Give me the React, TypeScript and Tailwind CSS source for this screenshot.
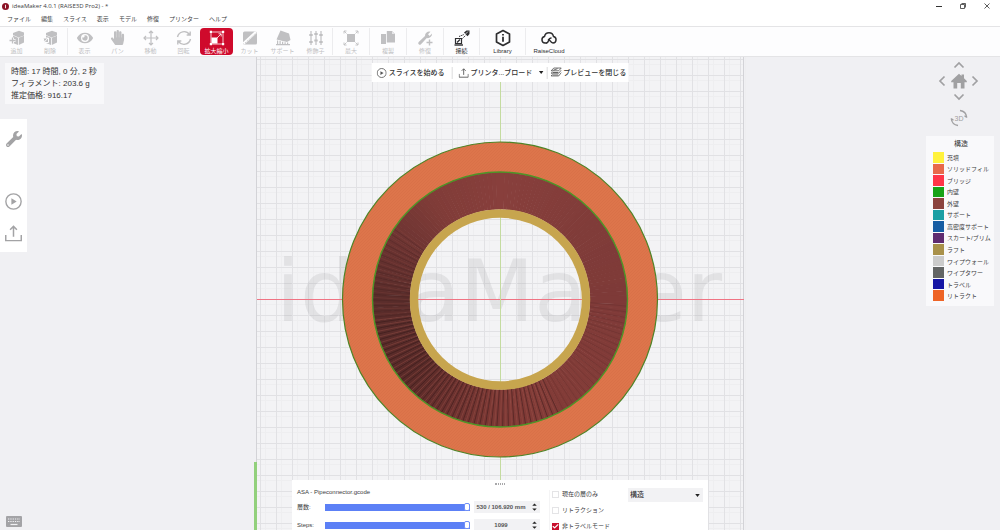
import React from "react";
import { FaEye, FaHandPaper, FaWrench } from "react-icons/fa";
import { Check } from "lucide-react";

type IconName =
  | "add" | "remove" | "view" | "pan" | "move" | "rotate" | "scale" | "cut"
  | "support" | "modifier" | "max" | "copy" | "repair" | "connect" | "library" | "cloud";

const menus = ["ファイル", "編集", "スライス", "表示", "モデル", "修復", "プリンター", "ヘルプ"];

const tools: { icon: IconName; label: string; box: string; tone: string }[] = [
  { icon: "add", label: "追加", box: "w-[33px]", tone: "text-[#c0c0c2]" },
  { icon: "remove", label: "削除", box: "w-[35px] border-r border-[#ececee]", tone: "text-[#c0c0c2]" },
  { icon: "view", label: "表示", box: "w-[33px]", tone: "text-[#c0c0c2]" },
  { icon: "pan", label: "パン", box: "w-[33px]", tone: "text-[#c0c0c2]" },
  { icon: "move", label: "移動", box: "w-[33px]", tone: "text-[#c0c0c2]" },
  { icon: "rotate", label: "回転", box: "w-[33px]", tone: "text-[#c0c0c2]" },
  { icon: "scale", label: "拡大縮小", box: "w-[33px] rounded-sm bg-[#cf0a2c]", tone: "text-white" },
  { icon: "cut", label: "カット", box: "w-[33px]", tone: "text-[#c0c0c2]" },
  { icon: "support", label: "サポート", box: "w-[33px]", tone: "text-[#c0c0c2]" },
  { icon: "modifier", label: "修飾子", box: "w-[34px] border-r border-[#ececee]", tone: "text-[#c0c0c2]" },
  { icon: "max", label: "最大", box: "w-[37px] border-r border-[#ececee]", tone: "text-[#c0c0c2]" },
  { icon: "copy", label: "複製", box: "w-[37px] border-r border-[#ececee]", tone: "text-[#c0c0c2]" },
  { icon: "repair", label: "修復", box: "w-[37px] border-r border-[#ececee]", tone: "text-[#c0c0c2]" },
  { icon: "connect", label: "接続", box: "w-[36px] border-r border-[#ececee]", tone: "text-[#2e2e30]" },
  { icon: "library", label: "Library", box: "w-[46px] border-r border-[#ececee]", tone: "text-[#2e2e30]" },
  { icon: "cloud", label: "RaiseCloud", box: "w-[46px]", tone: "text-[#2e2e30]" },
];

const legend = [
  { label: "充填", color: "bg-[#fff23c]" },
  { label: "ソリッドフィル", color: "bg-[#e8694a]" },
  { label: "ブリッジ", color: "bg-[#ff3548]" },
  { label: "内壁", color: "bg-[#17a317]" },
  { label: "外壁", color: "bg-[#8c433e]" },
  { label: "サポート", color: "bg-[#1b9fa4]" },
  { label: "高密度サポート", color: "bg-[#175da3]" },
  { label: "スカート/ブリム", color: "bg-[#5f2b70]" },
  { label: "ラフト", color: "bg-[#a9914a]" },
  { label: "ワイプウォール", color: "bg-[#cbcbcb]" },
  { label: "ワイプタワー", color: "bg-[#626464]" },
  { label: "トラベル", color: "bg-[#1616a5]" },
  { label: "リトラクト", color: "bg-[#ee6426]" },
];

function ToolIcon({ name }: { name: IconName }) {
  if (name === "view") return <FaEye className="size-4" />;
  if (name === "pan") return <FaHandPaper className="size-[15px]" />;
  return (
    <svg viewBox="0 0 16 16" className="size-4 overflow-visible" fill="none" stroke="currentColor" strokeWidth="1">
      {name === "add" && (
        <g>
          <path d="M4 3 10 .8l5 1.700v3L9.600 7.500 4 5z" fill="currentColor" stroke="none" />
          <path d="M4 5.500 9 7.700V15l-5-2zM9.800 7.700 15 5.800V12.500L9.800 15z" fill="currentColor" stroke="none" />
          <path d="M.5 10.500h6M3.500 7.500v6" stroke="#fdfdfe" strokeWidth="3" />
          <path d="M.5 10.500h6M3.500 7.500v6" strokeWidth="1.300" />
        </g>
      )}
      {name === "remove" && (
        <g>
          <path d="M4 3 10 .8l5 1.700v3L9.600 7.500 4 5z" fill="currentColor" stroke="none" />
          <path d="M4 5.500 9 7.700V15l-5-2zM9.800 7.700 15 5.800V12.500L9.800 15z" fill="currentColor" stroke="none" />
          <path d="M1 8h5.500v4.500H2.500z" stroke="#fdfdfe" strokeWidth="1" fill="currentColor" />
          <path d="M2 12.500 6 8" stroke="#fdfdfe" />
        </g>
      )}
      {name === "move" && (
        <path d="M8 1v14M1 8h14M6 3l2-2 2 2M6 13l2 2 2-2M3 6 1 8l2 2M13 6l2 2-2 2" strokeWidth="1.200" />
      )}
      {name === "rotate" && (
        <path d="M1.500 7A6.700 6.700 0 0 1 13.500 4.500M14.500 9A6.700 6.700 0 0 1 2.500 11.500M14.200 1.500v3.500h-3.500M1.800 14.500V11h3.500" strokeWidth="1.400" />
      )}
      {name === "scale" && (
        <g>
          <path d="M2 2h12v12H2z" strokeWidth=".8" />
          <path d="M2.500 7.500h6v6h-6z" fill="currentColor" stroke="none" />
          <path d="M8 8 12 4M9.500 3.800h2.700v2.700" strokeWidth=".8" />
          <path d="M.8.800h2.200v2.200H.8zM13 .8h2.200v2.200H13zM13 13h2.200v2.200H13zM.8 13h2.200v2.200H.8z" fill="currentColor" stroke="none" />
        </g>
      )}
      {name === "cut" && (
        <g>
          <rect x="1" y="1.500" width="14" height="13" rx="1.500" fill="currentColor" stroke="none" />
          <path d="M1.500 13.500 14 2" stroke="#fdfdfe" strokeWidth="2.400" />
          <path d="M3 13 13.500 3.500" strokeWidth=".7" strokeDasharray="1.500 1" />
        </g>
      )}
      {name === "support" && (
        <g fill="currentColor" stroke="none">
          <path d="M5.500.500 14 3.500 15.500 10 12 12 1.500 9.500z" />
          <path d="M2 10.500h1.200V15H2zM4.500 11h1.200v4H4.500zM7 11.800h1.200V15H7zM9.500 12.300h1.200V15H9.500zM12 12.500h1.200V15H12zM1 14h14v1.200H1z" />
        </g>
      )}
      {name === "modifier" && (
        <g>
          <path d="M3 1v14M8 1v14M13 1v14" strokeWidth="1.200" />
          <path d="M1.300 5h3.400M6.300 10.500h3.400M11.300 5h3.400M1.300 12h3.400M6.300 4h3.400M11.300 12h3.400" strokeWidth="2" />
        </g>
      )}
      {name === "max" && (
        <g>
          <rect x="4" y="4" width="8" height="8" fill="currentColor" stroke="none" />
          <path d="M1 1l2.500 2.500M15 1l-2.500 2.500M1 15l2.500-2.500M15 15l-2.500-2.500M1 3.500V1h2.500M12.500 1H15v2.500M15 12.500V15h-2.500M3.500 15H1v-2.500" strokeWidth=".9" />
        </g>
      )}
      {name === "copy" && (
        <g fill="currentColor" stroke="none">
          <path d="M1 4h5v10H1z" />
          <path d="M6.800 1H12l3 3v8.500H6.800z" />
          <path d="M12 1v3h3z" fill="#e6e6e8" />
        </g>
      )}
      {name === "repair" && (
        <g>
          <path d="M13.500 1.700 11 4.200l.8.900.8.800L15 3.500A4.200 4.200 0 0 1 9.800 8L4 14.200a1.600 1.600 0 0 1-2.300-2.300L8 6A4.200 4.200 0 0 1 13.500 1.700z" fill="currentColor" stroke="none" />
          <path d="M12.500 9.500v6M9.500 12.500h6" strokeWidth="1.400" />
        </g>
      )}
      {name === "connect" && (
        <g>
          <path d="M1.500 8.500h6v5h-6z" strokeWidth="1.200" />
          <path d="M.5 15h8.500" strokeWidth="1.400" />
          <path d="M3 12.500 6 9.500" strokeWidth="1.200" />
          <path d="M5 6.500 10 4.500M8.500 8.500l3-3" strokeDasharray="1.500 .8" />
          <path d="M10 2.500 12.500.500H15.500V4l-2 2.200z" fill="currentColor" stroke="none" />
          <path d="m11.500 4 2.500-2.500" stroke="#fff" strokeWidth=".7" />
        </g>
      )}
      {name === "library" && (
        <g>
          <path d="M8 .5 14.500 4v8L8 15.500 1.500 12V4z" strokeWidth="1.700" strokeLinejoin="round" />
          <path d="M8 6.800v5M8 4v1.600" strokeWidth="1.800" />
        </g>
      )}
      {name === "cloud" && (
        <g strokeWidth="1.500" strokeLinecap="round">
          <path d="M5.500 13H4a3.300 3.300 0 0 1-.5-6.500 4.600 4.600 0 0 1 9 0A3.300 3.300 0 0 1 12 13c-2.500 0-3-3.500-4.500-3.500" />
          <path d="M5.500 13c2.500 0 1.500-5 4.500-5" />
        </g>
      )}
    </svg>
  );
}

function PlayIcon({ className }: { className: string }) {
  return (
    <svg viewBox="0 0 16 16" className={className} fill="none" stroke="currentColor">
      <circle cx="8" cy="8" r="7.200" strokeWidth="1.300" />
      <path d="M6 5v6l5-3z" fill="currentColor" stroke="none" />
    </svg>
  );
}

function UploadIcon({ className }: { className: string }) {
  return (
    <svg viewBox="0 0 16 16" className={className} fill="none" stroke="currentColor" strokeWidth="1.400">
      <path d="M.7 9.500v5.200h14.600V9.500M8 11V1.300M4.800 4.500 8 1.300l3.200 3.200" />
    </svg>
  );
}

function LayersIcon() {
  return (
    <svg viewBox="0 0 16 16" className="size-[11px] shrink-0" fill="none" stroke="currentColor" strokeWidth="1">
      <path d="M4.500 1.500h11l-4 4H.7zM2.500 7.300.7 9h11l3.800-4.500M2.500 10.800.7 13h11l3.800-5" />
      <path d="M4 4.500 10 2.500M3 8h8M3 11.500h8" />
    </svg>
  );
}

const chevrons = {
  up: { box: "0 0 12 8", size: "h-2 w-3", d: "M1.500 6.500 6 2l4.500 4.500" },
  down: { box: "0 0 12 8", size: "h-2 w-3", d: "M1.500 1.500 6 6l4.500-4.500" },
  left: { box: "0 0 8 12", size: "h-3 w-2", d: "M6.500 1.500 2 6l4.500 4.500" },
  right: { box: "0 0 8 12", size: "h-3 w-2", d: "M1.500 1.500 6 6l-4.500 4.500" },
};

function Chevron({ to }: { to: keyof typeof chevrons }) {
  const c = chevrons[to];
  return (
    <svg viewBox={c.box} className={c.size} fill="none" stroke="currentColor" strokeWidth="1.700">
      <path d={c.d} />
    </svg>
  );
}

const CX = 500;
const CY = 242.5;
const axisY = 242.5;

// Point on a circle round the model's centre; degrees run clockwise from the right.
const at = (r: number, deg: number) => {
  const a = (deg * Math.PI) / 180;
  return `${(CX + r * Math.cos(a)).toFixed(2)} ${(CY + r * Math.sin(a)).toFixed(2)}`;
};

const shadeStops: [number, number[]][] = [
  [0, [126, 58, 56]],
  [45, [130, 60, 56]],
  [85, [128, 58, 54]],
  [110, [110, 50, 47]],
  [140, [88, 42, 40]],
  [180, [90, 45, 43]],
  [205, [106, 51, 49]],
  [235, [128, 60, 56]],
  [270, [136, 63, 60]],
  [320, [128, 60, 57]],
  [360, [126, 58, 56]],
];

function shade(deg: number) {
  const i = Math.max(1, shadeStops.findIndex(([d]) => d >= deg));
  const [d0, c0] = shadeStops[i - 1];
  const [d1, c1] = shadeStops[i];
  const t = (deg - d0) / (d1 - d0);
  return `rgb(${c0.map((c, k) => Math.round(c + (c1[k] - c) * t)).join(",")})`;
}

const wedges = Array.from({ length: 180 }, (_, i) => i * 2);
const ribs = Array.from({ length: 82 }, (_, i) => 2 + i * 2.6);

function Scene() {
  const lines = Array.from({ length: 31 }, (_, i) => i - 15);
  return (
    <svg viewBox="0 0 1000 473" preserveAspectRatio="xMidYMin slice" className="size-full" aria-label="モデルのプレビュー">
      <defs>
        <pattern id="solid" width="3" height="3" patternUnits="userSpaceOnUse">
          <rect width="3" height="3" fill="#dd754b" />
          <path d="M0 3 3 0" stroke="#d66e46" strokeWidth=".6" />
        </pattern>
        <pattern id="raft" width="2" height="3" patternUnits="userSpaceOnUse">
          <rect width="2" height="3" fill="#cfae54" />
          <path d="M1 0v3" stroke="#b08d3a" strokeWidth=".5" />
        </pattern>
      </defs>
      <rect width="1000" height="473" fill="#f0f0f3" />
      <rect x="256" y="0" width="488" height="473" fill="#f3f3f5" />
      {lines.map((k) => (
        <g key={k}>
          <path d={`M${CX + k * 16 + 5.5} 0V473`} stroke="#eeeef0" />
          <path d={`M257 ${axisY + k * 16 + 5}H744`} stroke="#eeeef0" />
        </g>
      ))}
      {lines.map((k) => (
        <g key={k}>
          <path d={`M${CX + k * 16 + 0.5} 0V473`} stroke="#e1e1e4" />
          <path d={`M257 ${axisY + k * 16}H744`} stroke="#e1e1e4" />
        </g>
      ))}
      <path d="M256.500 0V473M743.500 0V473" stroke="#d3d3d7" />
      <text x="499" y="264" textAnchor="middle" fontSize="86" fill="#909094" fillOpacity=".17" fontFamily="DejaVu Sans, sans-serif">
        ideaMaker
      </text>
      <rect x="257" y="242" width="487" height="1" fill="#f07484" />
      <rect x="500" y="25" width="1" height="398" fill="#c4dba0" />
      <path d="M254 405h3v68h-3z" fill="#92d07c" />

      <path
        fillRule="evenodd"
        fill="url(#solid)"
        stroke="#4f8326"
        strokeWidth="1.200"
        d={`M${CX - 157.5} ${CY}a157.500 157.500 0 1 0 315 0a157.500 157.500 0 1 0-315 0M${CX - 127} ${CY}a127 127 0 1 0 254 0a127 127 0 1 0-254 0`}
      />
      {wedges.map((d) => (
        <path key={d} fill={shade(d)} d={`M${at(90, d)}L${at(127, d)}A127 127 0 0 1 ${at(127, d + 2.3)}L${at(90, d + 2.3)}z`} />
      ))}
      {ribs.map((d) => {
        const strength = d < 60 ? 0.12 : d < 170 ? 0.42 : 0.2;
        return (
          <g key={d} strokeWidth="1" strokeOpacity={strength}>
            <path d={`M${at(90, d)}L${at(127, d + 1)}`} stroke="#2c1214" />
            <path d={`M${at(90, d + 1)}L${at(127, d + 2.2)}`} stroke="#9b5048" />
          </g>
        );
      })}
      <circle cx={CX} cy={CY} r="127.500" fill="none" stroke="#4f9428" strokeWidth="1.400" />
      <circle cx={CX} cy={CY} r="86" fill="none" stroke="url(#raft)" strokeWidth="8.500" />
    </svg>
  );
}

function Spin({ id, value }: { id: string; value: string }) {
  return (
    <span className="flex h-3 items-center bg-[#f2f2f4]">
      <input id={id} defaultValue={value} className="w-0 min-w-0 flex-1 bg-transparent text-center text-[6px] font-bold text-[#555] outline-none" />
      <span className="flex w-3 flex-col items-center gap-0.5">
        <button aria-label="増やす">
          <svg viewBox="0 0 6 4" className="h-[3px] w-[5px]"><path d="M0 3.500 3 .5l3 3z" fill="#222" /></svg>
        </button>
        <button aria-label="減らす">
          <svg viewBox="0 0 6 4" className="h-[3px] w-[5px]"><path d="M0 .5 3 3.500l3-3z" fill="#222" /></svg>
        </button>
      </span>
    </span>
  );
}

function Range({ label }: { label: string }) {
  return (
    <input
      type="range"
      aria-label={label}
      defaultValue={100}
      className="h-[7px] w-full appearance-none bg-[#5c80f6] [&::-webkit-slider-thumb]:h-2 [&::-webkit-slider-thumb]:w-1.5 [&::-webkit-slider-thumb]:appearance-none [&::-webkit-slider-thumb]:rounded-xs [&::-webkit-slider-thumb]:border [&::-webkit-slider-thumb]:border-[#6f8ff7] [&::-webkit-slider-thumb]:bg-white"
    />
  );
}

function Tick({ label, checked = false }: { label: string; checked?: boolean }) {
  return (
    <label className="grid grid-cols-[7px_1fr] items-center gap-x-[3px] text-[6px] leading-[8px]">
      <input
        type="checkbox"
        defaultChecked={checked}
        className="peer col-start-1 row-start-1 size-[7px] appearance-none border border-[#e4e4e6] bg-white checked:border-[#c8102e] checked:bg-[#c8102e]"
      />
      <Check className="pointer-events-none invisible col-start-1 row-start-1 size-[7px] text-white peer-checked:visible" strokeWidth={4} />
      <span className="col-start-2 row-start-1">{label}</span>
    </label>
  );
}

export default function App() {
  return (
    <div className="flex h-screen flex-col overflow-hidden bg-white font-['Liberation_Sans','Noto_Sans_CJK_JP',sans-serif] text-[6px] leading-[8px] text-[#3c3c3e]">
      <header className="flex h-3 shrink-0 items-center justify-between pr-2.5 pl-0.5">
        <div className="flex items-center gap-[3px]">
          <svg viewBox="0 0 8 8" className="size-[7px]">
            <circle cx="4" cy="4" r="4" fill="#8b1226" />
            <path d="M4 2v4" stroke="#fff" />
          </svg>
          <h1 className="font-['Open_Sans','Noto_Sans',sans-serif] text-[6px]">ideaMaker 4.0.1 (RAISE3D Pro2) - *</h1>
        </div>
        <div className="flex items-center gap-[18px] text-[#333]">
          <button aria-label="最小化">
            <svg viewBox="0 0 6 6" className="size-1.5" stroke="currentColor"><path d="M0 3.500h6" /></svg>
          </button>
          <button aria-label="元に戻す">
            <svg viewBox="0 0 6 6" className="size-1.5" stroke="currentColor" fill="none"><path d="M.5 1.500h4v4h-4zM1.500.500h4v4" strokeWidth=".8" /></svg>
          </button>
          <button aria-label="閉じる">
            <svg viewBox="0 0 6 6" className="size-1.5" stroke="currentColor"><path d="m.5.500 5 5m0-5-5 5" strokeWidth=".8" /></svg>
          </button>
        </div>
      </header>

      <nav className="flex h-3.5 shrink-0 items-center gap-2.5 px-[7px]">
        {menus.map((m) => (
          <button key={m}>{m}</button>
        ))}
      </nav>

      <div className="flex h-[31px] shrink-0 border-y border-[#e4e4e6] bg-[#fdfdfe] py-px">
        {tools.map((t) => (
          <button key={t.icon} className={`flex shrink-0 flex-col items-center justify-between whitespace-nowrap pt-0.5 ${t.box} ${t.tone}`}>
            <ToolIcon name={t.icon} />
            <span>{t.label}</span>
          </button>
        ))}
      </div>

      <main className="relative min-h-0 flex-1">
        <Scene />

        <section className="absolute top-1.5 left-[5px] w-[99px] bg-[#f8f8fa] px-1.5 pt-[3px] pb-0.5 text-[8px] leading-[12px] whitespace-nowrap text-[#333]">
          <p>時間: 17 時間, 0 分, 2 秒</p>
          <p>フィラメント: 203.6 g</p>
          <p>推定価格: 916.17</p>
        </section>

        <aside className="absolute top-[62px] left-0 flex w-[27px] flex-col items-center bg-white pt-3 pb-2.5 text-[#a3a3a5]">
          <button aria-label="設定"><FaWrench className="size-4" /></button>
          <button aria-label="スライス" className="mt-[46px]"><PlayIcon className="size-[17px]" /></button>
          <button aria-label="エクスポート" className="mt-[15px]"><UploadIcon className="size-[17px]" /></button>
        </aside>

        <div className="absolute top-1.5 left-1/2 flex h-[19px] -translate-x-1/2 items-center bg-white whitespace-nowrap text-[7px] font-medium text-[#333]">
          <button className="flex h-3 items-center gap-0.5 pr-[7px] pl-[5px]">
            <PlayIcon className="size-[10px] text-[#555]" />
            スライスを始める
          </button>
          <button className="flex h-3 items-center gap-0.5 border-l border-[#dcdcde] pr-1.5 pl-1.5">
            <UploadIcon className="size-[10px] text-[#555]" />
            プリンタ...ブロード
          </button>
          <button aria-label="アップロード先を選ぶ" className="pr-[3px]">
            <svg viewBox="0 0 6 4" className="h-[3px] w-[5px]"><path d="M0 0h6L3 4z" fill="#222" /></svg>
          </button>
          <button className="flex h-3 items-center gap-0.5 border-l border-[#dcdcde] pr-0.5 pl-[3px]">
            <LayersIcon />
            プレビューを閉じる
          </button>
        </div>

        <div className="absolute top-1 right-[19px] grid w-[45px] grid-cols-[12px_1fr_12px] items-center justify-items-center text-[#a0a0a2]">
          <button aria-label="上" className="col-start-2"><Chevron to="up" /></button>
          <button aria-label="左" className="col-start-1"><Chevron to="left" /></button>
          <button aria-label="ホーム" className="py-1">
            <svg viewBox="0 0 16 16" className="size-4" fill="currentColor">
              <path d="M8 .8 10.500 3V1.500h2.500v3.800L15.800 8v1.200H13.500V15.500H9.800V10H6.200v5.500H2.500V9.200H.2V8z" />
            </svg>
          </button>
          <button aria-label="右"><Chevron to="right" /></button>
          <button aria-label="下" className="col-start-2"><Chevron to="down" /></button>
          <button aria-label="3D表示" className="col-start-2 mt-2">
            <svg viewBox="0 0 18 18" className="size-[18px]" fill="none" stroke="currentColor" strokeWidth="1.300">
              <path d="M10 1.500A8 8 0 0 1 16.800 8.500M14.500 6.800l2.300 1.700M8 16.500A8 8 0 0 1 1.200 9.500M3.500 11.200 1.200 9.500" />
              <text x="9" y="11.500" fontSize="7" textAnchor="middle" fill="currentColor" stroke="none">3D</text>
            </svg>
          </button>
        </div>

        <section className="absolute top-[79px] right-1.5 w-[68px] bg-[#f9f9fb] pt-1 pb-1 pl-[7px]">
          <h2 className="pb-1 pr-[5px] text-center text-[7px] leading-[8px] text-[#333]">構造</h2>
          <ul className="flex h-[150px] flex-col">
            {legend.map((l) => (
              <li key={l.label} className="flex flex-1 items-center gap-[3px] whitespace-nowrap">
                <span className={`h-full w-[11px] shrink-0 border-b border-[#f9f9fb] ${l.color}`} />
                {l.label}
              </li>
            ))}
          </ul>
        </section>

        <button aria-label="キーボード" className="absolute bottom-[3px] left-1.5 text-[#a3a3a6]">
          <svg viewBox="0 0 16 11" className="h-[11px] w-4">
            <rect width="16" height="11" rx="1" fill="currentColor" />
            <path d="M2 3h12M2 5.500h12" stroke="#f0f0f3" strokeWidth="1.200" strokeDasharray="1.300 1" />
            <path d="M4.500 8.500h7" stroke="#f0f0f3" strokeWidth="1.200" />
          </svg>
        </button>

        <section className="absolute bottom-0 left-1/2 flex h-[50px] w-[416px] -translate-x-1/2 flex-col overflow-hidden bg-white">
          <div className="mt-[3px] h-0.5 w-2.5 shrink-0 self-center border-y border-dotted border-[#a8a8aa]" />
          <div className="flex px-[5px]">
            <div className="flex w-[245px] flex-col">
              <h2 className="mt-[3px] mb-[5px] leading-[8px]">ASA - Pipeconnector.gcode</h2>
              <div className="grid grid-cols-[28px_145px_70px] items-center gap-y-1.5">
                <label htmlFor="layer">層数:</label>
                <Range label="層数" />
                <div className="pl-1"><Spin id="layer" value="530 / 106.920 mm" /></div>
                <label htmlFor="step">Steps:</label>
                <Range label="Steps" />
                <div className="pl-1"><Spin id="step" value="1099" /></div>
              </div>
            </div>
            <div className="ml-[7px] mt-[5px] flex w-[79px] flex-col gap-2 border-l border-[#f4f4f5] pl-0.5">
              <Tick label="現在の層のみ" />
              <Tick label="リトラクション" />
              <Tick label="非トラベルモード" checked />
            </div>
            <div className="mt-[3px] grid h-3.5 flex-1 grid-cols-1 items-center bg-[#f2f2f4]">
              <select aria-label="表示タイプ" className="col-start-1 row-start-1 w-full appearance-none bg-transparent pl-0.5 text-[7px] leading-[10px] font-medium text-[#333]">
                <option>構造</option>
              </select>
              <svg viewBox="0 0 6 4" className="pointer-events-none col-start-1 row-start-1 mr-[3px] h-[3px] w-[5px] justify-self-end"><path d="M0 0h6L3 4z" fill="#222" /></svg>
            </div>
          </div>
        </section>
      </main>
    </div>
  );
}
